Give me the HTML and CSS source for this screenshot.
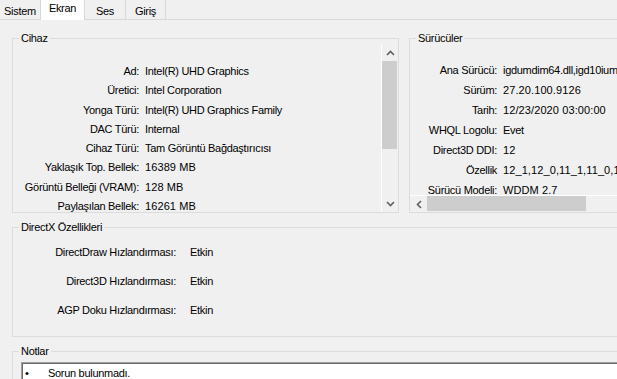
FILE: index.html
```html
<!DOCTYPE html>
<html lang="tr">
<head>
    <meta charset="UTF-8">
    <meta name="viewport" content="width=device-width, initial-scale=1.0">
    <title>DirectX Tanı Aracı - Ekran</title>
    <link rel="stylesheet" href="styles.css">
</head>
<body>
    <div class="window">
        <div class="tabs">
            <div class="tab tab-sistem">Sistem</div>
            <div class="tab tab-ekran active">Ekran</div>
            <div class="tab tab-ses">Ses</div>
            <div class="tab tab-giris">Giriş</div>
        </div>

        <div class="panel">
            <div class="top-row">
                <!-- Cihaz -->
                <fieldset class="group device">
                    <legend>Cihaz</legend>
                    <div class="device-body">
                        <div class="info-list device-list">
                            <span class="label">Ad:</span><span class="value">Intel(R) UHD Graphics</span>
                            <span class="label">Üretici:</span><span class="value">Intel Corporation</span>
                            <span class="label">Yonga Türü:</span><span class="value">Intel(R) UHD Graphics Family</span>
                            <span class="label">DAC Türü:</span><span class="value">Internal</span>
                            <span class="label">Cihaz Türü:</span><span class="value">Tam Görüntü Bağdaştırıcısı</span>
                            <span class="label">Yaklaşık Top. Bellek:</span><span class="value num">16389 MB</span>
                            <span class="label">Görüntü Belleği (VRAM):</span><span class="value num">128 MB</span>
                            <span class="label">Paylaşılan Bellek:</span><span class="value num">16261 MB</span>
                        </div>
                        <div class="vscroll">
                            <div class="arrow-box">
                                <svg width="9" height="6" viewBox="0 0 9 6"><polyline points="1,5 4.5,1.5 8,5" fill="none" stroke="#606060" stroke-width="1.6"/></svg>
                            </div>
                            <div class="vthumb"></div>
                            <div class="track-fill"></div>
                            <div class="arrow-box">
                                <svg width="9" height="6" viewBox="0 0 9 6"><polyline points="1,1 4.5,4.5 8,1" fill="none" stroke="#606060" stroke-width="1.6"/></svg>
                            </div>
                        </div>
                    </div>
                </fieldset>

                <!-- Sürücüler -->
                <fieldset class="group drivers">
                    <legend>Sürücüler</legend>
                    <div class="drivers-body">
                        <div class="info-list driver-list">
                            <span class="label">Ana Sürücü:</span><span class="value">igdumdim64.dll,igd10iumd64.dll,igd10iumd64.dll,igd12umd64.dll</span>
                            <span class="label">Sürüm:</span><span class="value num">27.20.100.9126</span>
                            <span class="label">Tarih:</span><span class="value num">12/23/2020 03:00:00</span>
                            <span class="label">WHQL Logolu:</span><span class="value">Evet</span>
                            <span class="label">Direct3D DDI:</span><span class="value num">12</span>
                            <span class="label">Özellik</span><span class="value num">12_1,12_0,11_1,11_0,10_1,10_0,9_3,9_2,9_1</span>
                            <span class="label">Sürücü Modeli:</span><span class="value num">WDDM 2.7</span>
                        </div>
                        <div class="hscroll">
                            <div class="arrow-box harrow">
                                <svg width="6" height="9" viewBox="0 0 6 9"><polyline points="5,1 1.5,4.5 5,8" fill="none" stroke="#606060" stroke-width="1.6"/></svg>
                            </div>
                            <div class="hthumb"></div>
                        </div>
                    </div>
                </fieldset>
            </div>

            <!-- DirectX Özellikleri -->
            <fieldset class="group directx">
                <legend>DirectX Özellikleri</legend>
                <div class="info-list dx-list">
                    <span class="label">DirectDraw Hızlandırması:</span><span class="value">Etkin</span>
                    <span class="label">Direct3D Hızlandırması:</span><span class="value">Etkin</span>
                    <span class="label">AGP Doku Hızlandırması:</span><span class="value">Etkin</span>
                </div>
            </fieldset>

            <!-- Notlar -->
            <fieldset class="group notes">
                <legend>Notlar</legend>
                <div class="notes-box">
                    <div class="note"><span class="bullet">•</span>Sorun bulunmadı.</div>
                </div>
            </fieldset>
        </div>
    </div>
</body>
</html>
```

FILE: styles.css
```css
* {
    box-sizing: border-box;
}

body {
    margin: 0;
    background: #f0f0f0;
    font-family: "Liberation Sans", Arial, sans-serif;
    font-size: 11px;
    letter-spacing: -0.3px;
    color: #000;
    overflow: hidden;
}

.window {
    width: 617px;
    height: 379px;
    overflow: hidden;
}

/* Tabs */
.tabs {
    display: flex;
    height: 19px;
}

.tab {
    height: 19px;
    padding-top: 4px;
    line-height: 14px;
    text-align: center;
    border-right: 1px solid #d9d9d9;
    background: #f0f0f0;
}

.tab-sistem { width: 41px; }
.tab-ekran { width: 44px; }
.tab-ses { width: 41px; }
.tab-giris { width: 40px; }

.tab.active {
    height: 20px;
    padding-top: 1px;
    line-height: 15px;
    background: #fff;
    position: relative;
    z-index: 1;
}

.panel {
    border-top: 1px solid #d9d9d9;
    padding: 12px 0 0 12px;
}

/* Group boxes */
.group {
    margin: 0;
    padding: 0;
    border: 1px solid #dcdcdc;
    min-width: 0;
}

.group legend {
    margin-left: 6px;
    padding: 0 2px;
    line-height: 12px;
}

.top-row {
    display: flex;
    gap: 10px;
}

.info-list {
    display: grid;
    align-content: start;
    white-space: nowrap;
}

.info-list .label {
    text-align: right;
}

.info-list .num {
    letter-spacing: 0.1px;
}

/* Cihaz */
.device {
    width: 387px;
    flex-shrink: 0;
}

.device-body {
    display: flex;
    height: 168px;
}

.device-list {
    flex: 1;
    grid-template-columns: 126px auto;
    column-gap: 6px;
    grid-auto-rows: 19.3px;
    line-height: 19.3px;
    padding-top: 18px;
    overflow: hidden;
}

.vscroll {
    width: 17px;
    border-left: 1px solid #fff;
    display: flex;
    flex-direction: column;
}

.arrow-box {
    height: 17px;
    display: flex;
    align-items: center;
    justify-content: center;
    flex-shrink: 0;
}

.arrow-box svg {
    display: block;
}

.vthumb {
    width: 15px;
    height: 88px;
    background: #cdcdcd;
}

.track-fill {
    flex: 1;
}

/* Sürücüler */
.drivers {
    width: 260px;
    flex-shrink: 0;
}

.drivers-body {
    height: 168px;
    display: flex;
    flex-direction: column;
}

.driver-list {
    height: 151px;
    grid-template-columns: 80px auto;
    column-gap: 6px;
    grid-auto-rows: 20px;
    line-height: 20px;
    padding: 16px 0 0 7px;
    overflow: hidden;
}

.hscroll {
    height: 17px;
    border-top: 1px solid #fff;
    display: flex;
}

.harrow {
    width: 17px;
    height: 16px;
}

.hthumb {
    width: 159px;
    height: 15px;
    background: #cdcdcd;
}

/* DirectX Özellikleri */
.directx {
    margin-top: 8px;
    width: 640px;
}

.dx-list {
    grid-template-columns: 163px auto;
    column-gap: 14px;
    grid-auto-rows: 29px;
    line-height: 29px;
    padding: 5px 0 11px 0;
}

/* Notlar */
.notes {
    margin-top: 8px;
    width: 640px;
}

.notes-box {
    margin: 5px 0 0 8px;
    height: 40px;
    background: #fff;
    border-top: 1px solid #a0a0a0;
    border-left: 1px solid #a0a0a0;
    box-shadow: inset 1px 1px 0 #696969;
    padding-top: 2px;
}

.note {
    display: flex;
    line-height: 16px;
}

.bullet {
    width: 26px;
    padding-left: 3px;
}
```
